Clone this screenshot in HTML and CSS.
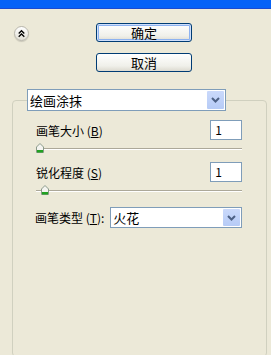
FILE: index.html
```html
<!DOCTYPE html>
<html>

<head>
  <meta charset="utf-8">
  <title>绘画涂抹</title>
  <link rel="stylesheet" href="styles.css">
</head>

<body>
  <div class="titlebar"></div>

  <div class="top">
    <span class="collapse">
      <svg width="14" height="14" viewBox="0 0 14 14">
        <path d="M4 6.5 L7 3.5 L10 6.5 M4 10 L7 7 L10 10" fill="none" stroke="#000" stroke-width="1.4"/>
      </svg>
    </span>
    <div class="buttons">
      <button class="btn default">确定</button>
      <button class="btn">取消</button>
    </div>
  </div>

  <fieldset class="group">
    <legend>
      <div class="combo wide">
        <span class="combo-text">绘画涂抹</span>
        <span class="combo-arrow">
          <svg width="9" height="6" viewBox="0 0 9 6"><path d="M1 1 L4.5 4.5 L8 1" fill="none" stroke="#4d6185" stroke-width="2"/></svg>
        </span>
      </div>
    </legend>

    <div class="row">
      <span class="label">画笔大小 (<u>B</u>)</span>
      <span class="field">1</span>
    </div>
    <div class="slider">
      <span class="track"></span>
      <svg class="thumb" width="8" height="10" viewBox="0 0 8 10">
        <path d="M0.5 4 L4 0.5 L7.5 4 L7.5 9.5 L0.5 9.5 Z" fill="#f4f4f0" stroke="#8a9a8a"/>
        <rect x="1" y="7" width="6" height="2.5" fill="#21a121"/>
      </svg>
    </div>

    <div class="row">
      <span class="label">锐化程度 (<u>S</u>)</span>
      <span class="field">1</span>
    </div>
    <div class="slider">
      <span class="track"></span>
      <svg class="thumb shift" width="8" height="10" viewBox="0 0 8 10">
        <path d="M0.5 4 L4 0.5 L7.5 4 L7.5 9.5 L0.5 9.5 Z" fill="#f4f4f0" stroke="#8a9a8a"/>
        <rect x="1" y="7" width="6" height="2.5" fill="#21a121"/>
      </svg>
    </div>

    <div class="row type">
      <span class="label">画笔类型 (<u>T</u>):</span>
      <div class="combo narrow">
        <span class="combo-text">火花</span>
        <span class="combo-arrow">
          <svg width="9" height="6" viewBox="0 0 9 6"><path d="M1 1 L4.5 4.5 L8 1" fill="none" stroke="#4d6185" stroke-width="2"/></svg>
        </span>
      </div>
    </div>
  </fieldset>
</body>

</html>
```

FILE: styles.css
```css
html,
body {
  height: 355px;
}

body {
  margin: 0;
  background: #ece9d8;
  font: 12px "Noto Sans CJK SC", "DejaVu Sans", sans-serif;
  color: #000000;
  overflow: hidden;
}

.titlebar {
  height: 8px;
  background: #0562f7;
  border-bottom: 1px solid #1a4bd0;
}

.top {
  display: flex;
  align-items: flex-start;
  padding: 14px 0 0 14px;
}

.collapse {
  display: flex;
  align-items: center;
  justify-content: center;
  width: 13px;
  height: 13px;
  margin-top: 3px;
  border: 1px solid #b8b6ac;
  border-radius: 50%;
  background: linear-gradient(#ffffff, #e2e0d6);
  box-shadow: 0 1px 1px rgba(0, 0, 0, 0.15);
}

.buttons {
  display: flex;
  flex-direction: column;
  gap: 11px;
  margin-left: 67px;
}

.btn {
  width: 96px;
  height: 19px;
  padding: 0;
  border: 1px solid #003c74;
  border-radius: 3px;
  background: linear-gradient(#ffffff, #f0f0ea 70%, #dcdad0);
  font: 13px "Noto Sans CJK SC", sans-serif;
  line-height: 17px;
  color: #000000;
}

.btn.default {
  box-shadow: inset 0 0 0 1px #cfdffb, inset 0 0 0 2px #8db2f0;
}

.group {
  box-sizing: border-box;
  margin: 17px 6px 0 12px;
  padding: 9px 14px 0 14px;
  height: 268px;
  border: 1px solid #d0d0bf;
  border-radius: 4px;
}

.group legend {
  padding: 0;
}

.combo {
  display: flex;
  align-items: center;
  height: 22px;
  box-sizing: border-box;
  border: 1px solid #7f9db9;
  background: #ffffff;
  font-size: 13px;
}

.combo.wide {
  width: 199px;
}

.combo.narrow {
  width: 132px;
  height: 21px;
}

.combo-text {
  flex: 1;
  padding-left: 2px;
}

.combo-arrow {
  display: flex;
  align-items: center;
  justify-content: center;
  width: 17px;
  height: calc(100% - 2px);
  margin-right: 1px;
  background: linear-gradient(#cad9fb, #b6cbf6);
  border-radius: 1px;
}

.row {
  display: flex;
  align-items: center;
  justify-content: space-between;
  height: 20px;
  padding: 0 10px 0 9px;
}

.label {
  white-space: nowrap;
}

.field {
  width: 32px;
  height: 20px;
  box-sizing: border-box;
  border: 1px solid #7f9db9;
  background: #ffffff;
  padding-left: 4px;
  line-height: 18px;
}

.slider {
  position: relative;
  height: 22px;
  margin: 0 10px 0 9px;
}

.track {
  position: absolute;
  left: 0;
  right: 0;
  top: 8px;
  height: 1px;
  background: #aca899;
  border-bottom: 1px solid #ffffff;
}

.thumb {
  position: absolute;
  left: 0;
  top: 3px;
}

.thumb.shift {
  left: 5px;
}

.row.type {
  justify-content: flex-start;
  gap: 6px;
  height: 21px;
  margin-top: 3px;
  padding-left: 8px;
}
```
